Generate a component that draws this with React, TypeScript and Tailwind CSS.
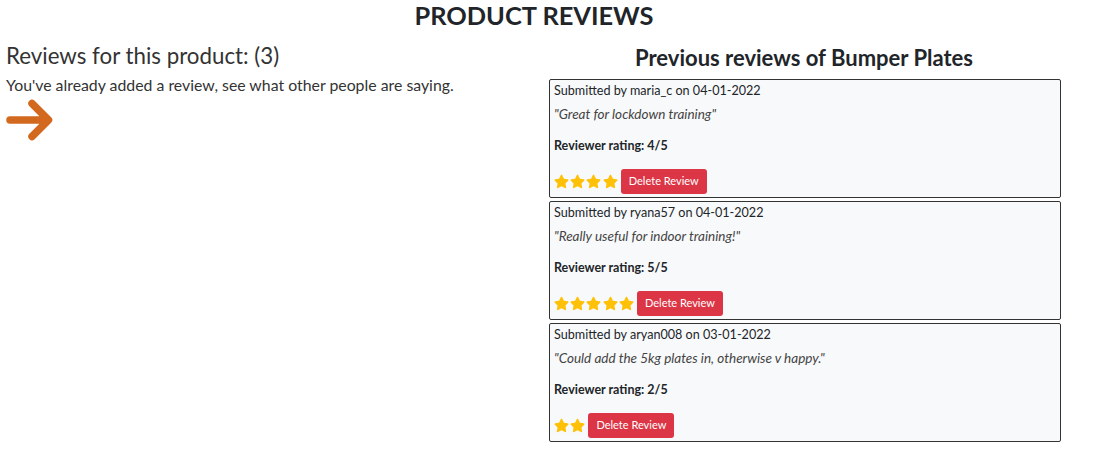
import React from "react";
import { FaStar } from "react-icons/fa";

type Review = {
  user: string;
  date: string;
  text: string;
  rating: number;
};

const reviews: Review[] = [
  { user: "maria_c", date: "04-01-2022", text: "Great for lockdown training", rating: 4 },
  { user: "ryana57", date: "04-01-2022", text: "Really useful for indoor training!", rating: 5 },
  { user: "aryan008", date: "03-01-2022", text: "Could add the 5kg plates in, otherwise v happy.", rating: 2 },
];

const ReviewCard: React.FC<{ review: Review }> = ({ review }) => (
  <div className="border border-[#333] rounded-[2px] bg-[#f8f9fa] px-[4px] pt-[2px] pb-[3px] text-[12.6px] text-[#212529]">
    <p className="leading-[18px]">
      Submitted by {review.user} on {review.date}
    </p>
    <p className="leading-[18px] mt-[5px] italic text-[13.5px] text-[#444]">"{review.text}"</p>
    <p className="leading-[18px] mt-[14px] font-bold text-[12.5px]">
      Reviewer rating: {review.rating}/5
    </p>
    <div className="flex items-center mt-[14px]">
      {Array.from({ length: review.rating }).map((_, i) => (
        <span key={i} className="w-[16.2px] flex items-center">
          <FaStar size={15} color="#ffc107" />
        </span>
      ))}
      <button className="ml-[2px] h-[25px] px-[8px] rounded-[3px] bg-[#dc3545] text-white text-[11px]">
        Delete Review
      </button>
    </div>
  </div>
);

export default function App() {
  return (
    <div className="w-[1068px] bg-white font-['Lato','Liberation_Sans',sans-serif] text-[#333]">
      <h1 className="text-center text-[25.4px] font-bold leading-[30px] text-[#212529]">
        PRODUCT REVIEWS
      </h1>

      <div className="flex">
        {/* left column */}
        <div className="w-[547px] pl-[6px] pt-[12px]">
          <h5 className="text-[22.3px] leading-[28px]">Reviews for this product: (3)</h5>
          <p className="text-[15.85px] leading-[22px] mt-[4px]">
            You've already added a review, see what other people are saying.
          </p>
          <svg width="48" height="42" viewBox="0 0 48 42" className="mt-[3px] -ml-[1px]">
            <path
              d="M5 21 H42 M27 4.5 L43.5 21 L27 37.5"
              fill="none"
              stroke="#d2691e"
              strokeWidth="7.5"
              strokeLinecap="round"
              strokeLinejoin="round"
            />
          </svg>
        </div>

        {/* right column */}
        <div className="w-[514px] pt-[14px]">
          <h4 className="text-center text-[22px] font-bold leading-[28px] text-[#212529]">
            Previous reviews of Bumper Plates
          </h4>
          <div className="ml-[2px] w-[512px] mt-[7px] flex flex-col gap-[3px]">
            {reviews.map((r) => (
              <ReviewCard key={r.user} review={r} />
            ))}
          </div>
        </div>
      </div>
    </div>
  );
}
